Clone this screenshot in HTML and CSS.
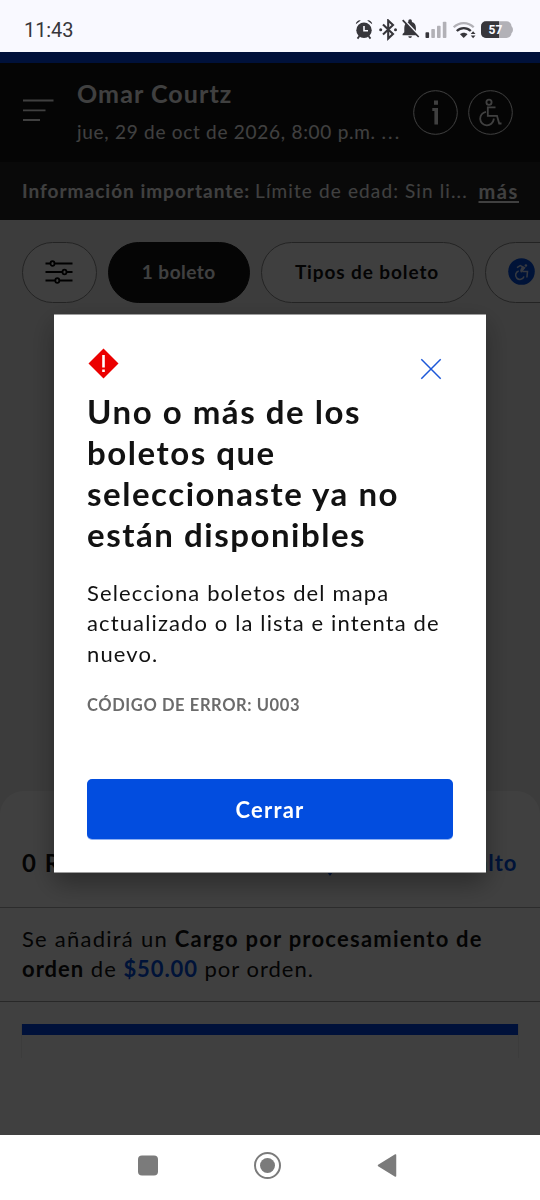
FILE: index.html
```html
<!DOCTYPE html>
<html lang="es">
<head>
<meta charset="utf-8">
<title>Omar Courtz</title>
<link rel="stylesheet" href="styles.css">
</head>
<body>
<div class="screen">
  <div class="status">
    <span class="clock">11:43</span>
    <svg class="status-icons" width="160" height="22" viewBox="355 19 160 22">
      <g fill="#37363b">
        <circle cx="364" cy="30.3" r="7.700"/>
        <path d="M355.800 24.2a4 4 0 0 1 5-3.700zM372.200 24.2a4 4 0 0 0-5-3.700z"/>
      </g>
      <path d="M359.5 36l-2 2.6M368.500 36l2 2.6" stroke="#37363b" stroke-width="1.8"/>
      <path d="M364 26v4.800h4" fill="none" stroke="#f9f9ff" stroke-width="1.6"/>
      <path d="M383 24.500l10 9.500-4.800 4.500V20.500l4.800 4.500-10 9.500" fill="none" stroke="#37363b" stroke-width="2.100"/>
      <circle cx="380.700" cy="29.700" r="1.500" fill="#37363b"/>
      <circle cx="395.500" cy="29.700" r="1.500" fill="#37363b"/>
      <path d="M402.600 35.300v-1.400l1.700-1.700v-4.500c0-3 1.500-5 4-5.700v-1a1.800 1.800 0 0 1 3.600 0v1c2.600.7 4 2.900 4 5.700v4.500l1.700 1.700v1.400zM408.300 36.200h3.600a1.800 1.800 0 0 1-3.600 0z" fill="#37363b"/>
      <path d="M404 20l16 16.800" stroke="#f9f9ff" stroke-width="2"/>
      <path d="M402.700 20.200l16 16.800" stroke="#37363b" stroke-width="1.700"/>
      <rect x="425.500" y="32.300" width="3.600" height="5.700" rx=".8" fill="#37363b"/>
      <g fill="#b2b1b7">
        <rect x="431.300" y="29" width="3.600" height="9" rx=".8"/>
        <rect x="437" y="25.700" width="3.600" height="12.300" rx=".8"/>
        <rect x="442.800" y="21.700" width="3.600" height="16.300" rx=".8"/>
      </g>
      <path d="M453.700 27.300c5.600-5.600 14.400-5.600 20 0" fill="none" stroke="#b2b1b7" stroke-width="2.300"/>
      <path d="M456.800 31c4-3.900 10-3.900 14 0" fill="none" stroke="#37363b" stroke-width="2.300"/>
      <path d="M460 34.200c2.200-2 5.400-2 7.500 0l-3.800 3.800z" fill="#37363b"/>
      <path d="M470.700 34l2.400-2.800 2.400 2.800zM470.700 35.400l2.400 2.800 2.400-2.800z" fill="#37363b"/>
      <path d="M511 26.300c2.600.8 2.600 6.200 0 7z" fill="#b2b1b7"/>
      <rect x="481" y="21.200" width="30.500" height="16.800" rx="5" fill="#b2b1b7"/>
      <path d="M499 21.200h-13a5 5 0 0 0-5 5V33a5 5 0 0 0 5 5h13z" fill="#37363b"/>
      <text x="488.500" y="34" class="battery-text">57</text>
    </svg>
  </div>

  <div class="page">
    <header class="event">
      <svg class="menu" width="32" height="24" viewBox="0 0 32 24"><path d="M1 2.500h30.500M1 12.300h22.500M1 22h17" stroke="#fff" stroke-width="1.800"/></svg>
      <div class="event-text">
        <div class="event-name">Omar Courtz</div>
        <div class="event-date">jue, 29 de oct de 2026, 8:00 p.m. <span class="dots">...</span></div>
      </div>
      <svg class="round" width="45" height="45" viewBox="0 0 45 45"><circle cx="22.500" cy="22.500" r="21.800" fill="none" stroke="#fff"/><path d="M21 10.500h4v4.200h-4zM19.300 18h5.700v16.500h-3.600v-13.600h-2.100z" fill="#fff"/></svg>
      <svg class="round" width="45" height="45" viewBox="0 0 45 45" fill="none" stroke="#fff"><circle cx="22.500" cy="22.500" r="21.800"/><g stroke-width="1.800"><circle cx="21" cy="12.200" r="2.600"/><path d="M27.500 17.300h-7.700v8.500h9.200l2.200 7.700h2.300M18 21.800a6.800 6.800 0 1 0 7.700 7.700v-1"/></g></svg>
    </header>
    <div class="notice">
      <b>Información importante:</b><span class="notice-text">Límite de edad: Sin li...</span><a class="more">más</a>
    </div>
    <div class="filters">
      <div class="pill pill-icon">
        <svg width="28" height="26" viewBox="0 0 28 26" fill="#fafafa" stroke="#000" stroke-width="1.800"><path d="M.5 4.500h27M.5 13h27M.5 21.500h27"/><ellipse cx="7.500" cy="4.500" rx="2" ry="2.400"/><ellipse cx="19.500" cy="13" rx="2" ry="2.400"/><ellipse cx="12.300" cy="21.500" rx="2" ry="2.400"/></svg>
      </div>
      <div class="pill pill-count">1 boleto</div>
      <div class="pill pill-types">Tipos de boleto</div>
      <div class="pill pill-access">
        <svg width="27" height="27" viewBox="0 0 27 27"><circle cx="13.500" cy="13.500" r="13.300" fill="#024ddf"/><g fill="none" stroke="#d5e2ff" stroke-width="1.500"><path d="M9 9.700l3.300-2.200 4.200 2.200-3.800 4.600M14.500 13.500h5l-.6 6M10.700 13a4.300 4.300 0 1 0 5.300 5.500"/></g><path d="M14 8l3 1.700-3 4.300-2-1.500z" fill="#d5e2ff"/><circle cx="17.900" cy="7.500" r="1.300" fill="#d5e2ff"/></svg>
      </div>
    </div>
    <section class="sheet">
      <div class="sheet-head">
        <span class="results">0 Resultados</span>
        <span class="sort"><svg width="20" height="29" viewBox="0 0 20 29"><path d="M8.600 2h2.800v18l4-4 2 2L10 28l-7.400-10 2-2 4 4z" fill="#024ddf"/></svg><span>Precio más alto</span></span>
      </div>
      <p class="fee">Se añadirá un <b>Cargo por procesamiento de</b><br><span class="fee-end"><b>orden</b> de <b class="amount">$50.00</b> por orden.</span></p>
      <div class="card"></div>
    </section>
  </div>

  <nav class="nav">
    <svg width="540" height="65" viewBox="0 0 540 65" fill="#7b7b7b"><rect x="138" y="20.500" width="20" height="20" rx="4"/><circle cx="267.500" cy="30.500" r="7.500"/><circle cx="267.500" cy="30.500" r="12.500" fill="none" stroke="#7b7b7b" stroke-width="2"/><path d="M378.500 30.500L395.500 20v21z" stroke="#7b7b7b" stroke-width="1.500" stroke-linejoin="round"/></svg>
  </nav>
</div>

<div class="overlay">
  <div class="modal">
    <div class="modal-top">
      <svg width="32" height="32" viewBox="0 0 32 32"><path d="M16.500.500l15 15-15 15-15-15z" fill="#eb0000"/><path d="M15.200 7h2.600v12.500h-2.600zM15.200 21.500h2.600v2.600h-2.600z" fill="#fff"/></svg>
      <svg class="close" width="22" height="22" viewBox="0 0 22 22"><path d="M1.300 1.300l19.400 19.400M20.700 1.300L1.300 20.700" stroke="#1d58d8" stroke-width="1.500"/></svg>
    </div>
    <h1>Uno o más de los<br>boletos que<br>seleccionaste ya no<br>están disponibles</h1>
    <p class="message">Selecciona boletos del mapa<br>actualizado o la lista e intenta de<br>nuevo.</p>
    <p class="code">CÓDIGO DE ERROR: U003</p>
    <button class="ok">Cerrar</button>
  </div>
</div>
</body>
</html>
```
FILE: styles.css
```css
* { box-sizing: border-box; margin: 0; }
body { width: 540px; height: 1200px; overflow: hidden; font-family: Lato, sans-serif; color: #121212; }
.screen { display: flex; flex-direction: column; height: 1200px; }

.status { display: flex; justify-content: space-between; align-items: flex-start; height: 52px; padding: 19px 25px 0 24px; background: #f9f9ff; }
.clock { font: 400 20px/22px Roboto, sans-serif; letter-spacing: -.100px; color: #37363b; }
.battery-text { font: 700 12px Roboto, sans-serif; fill: #f9f9ff; }

.page { display: flex; flex-direction: column; flex: 1; background: #efefef; white-space: nowrap; }
.event { display: flex; align-items: flex-start; height: 110px; border-top: 11px solid #0045e8; background: #141414; color: #fff; padding: 15px 27px 0 22px; }
.menu { margin-top: 20px; }
.event-text { flex: none; width: 359px; padding-left: 23px; }
.event-name { font-weight: 700; font-size: 25px; line-height: 30px; letter-spacing: 1.100px; }
.event-date { margin-top: 12px; font-size: 19px; line-height: 24px; letter-spacing: .720px; }
.dots { letter-spacing: 2.200px; }
.round { margin-top: 12px; flex: none; }
.round + .round { margin-left: 10px; }

.notice { display: flex; height: 58px; padding: 16.500px 22px 0; background: #262626; color: #fff; font-size: 19px; line-height: 24px; }
.notice b { letter-spacing: 1px; width: 233px; }
.notice-text { letter-spacing: 1.120px; flex: 1; }
.more { font-weight: 700; letter-spacing: 1.600px; font-size: 20px; margin-right: -1px; text-decoration: underline; text-decoration-thickness: 2px; text-underline-offset: 2px; }

.filters { display: flex; gap: 11px; height: 571px; padding: 22px 0 0 22px; overflow: hidden; }
.pill { display: flex; flex: none; align-items: center; justify-content: center; height: 60.500px; padding-bottom: 1px; border: 1px solid #8c8c8c; border-radius: 31px; background: #fafafa; font-weight: 700; font-size: 19px; }
.pill-icon { width: 75px; padding-right: 1px; }
.pill-count { width: 141.500px; background: #141414; border-color: #141414; color: #fff; letter-spacing: .500px; }
.pill-types { width: 213px; letter-spacing: .900px; }
.pill-access { width: 200px; justify-content: flex-start; padding-left: 22.500px; }

.sheet { flex: 1; border-radius: 24px 24px 0 0; background: #fff; }
.sheet-head { display: flex; justify-content: space-between; height: 117px; padding: 57px 22.500px 0 22px; border-bottom: 1px solid #b0b0b0; font-weight: 700; font-size: 24px; line-height: 29px; letter-spacing: 1px; }
.results { letter-spacing: 1.500px; }
.sort { display: flex; color: #024ddf; font-size: 22px; }
.sort svg { margin-right: 13px; }
.fee { height: 94px; padding: 16px 22px 0; border-bottom: 1px solid #a0a0a0; font-size: 22px; line-height: 30px; letter-spacing: 1.240px; }
.fee-end { letter-spacing: 1px; }
.amount { color: #024ddf; letter-spacing: .900px; }
.card { height: 34px; margin: 22px 21px 0; border: solid #eee; border-width: 0 1px; background: linear-gradient(#0045e8, #0045e8) 0 0 / 100% 11px no-repeat #fff; }

.nav { height: 65px; background: #fff; }

.overlay { position: fixed; top: 52px; left: 0; width: 540px; height: 1083px; padding: 262px 54px 0; background: rgba(0, 0, 0, .75); }
.modal { height: 559px; padding: 33px 33px 0; border: solid #9d9d9d; border-width: 1px 0; background: #fff; box-shadow: 0 10px 24px rgba(0, 0, 0, .350); white-space: nowrap; }
.modal-top { display: flex; justify-content: space-between; align-items: flex-start; height: 42.500px; }
.close { margin: 10px 11px 0 0; }
h1 { font-weight: 700; font-size: 33px; line-height: 41.250px; letter-spacing: 1.530px; }
.message { margin-top: 22.500px; font-size: 22px; line-height: 30.250px; letter-spacing: 1.130px; }
.code { margin-top: 26px; font-weight: 700; font-size: 16.500px; line-height: 20px; letter-spacing: .600px; color: #6b6b6b; }
.ok { display: block; width: 100%; height: 60px; margin-top: 64px; padding-top: 2px; border: 0; border-radius: 5px; background: #024ddf; box-shadow: 0 1px 0 #8fb0f2; color: #fff; font: 700 22px Lato, sans-serif; letter-spacing: 1.200px; }
```
